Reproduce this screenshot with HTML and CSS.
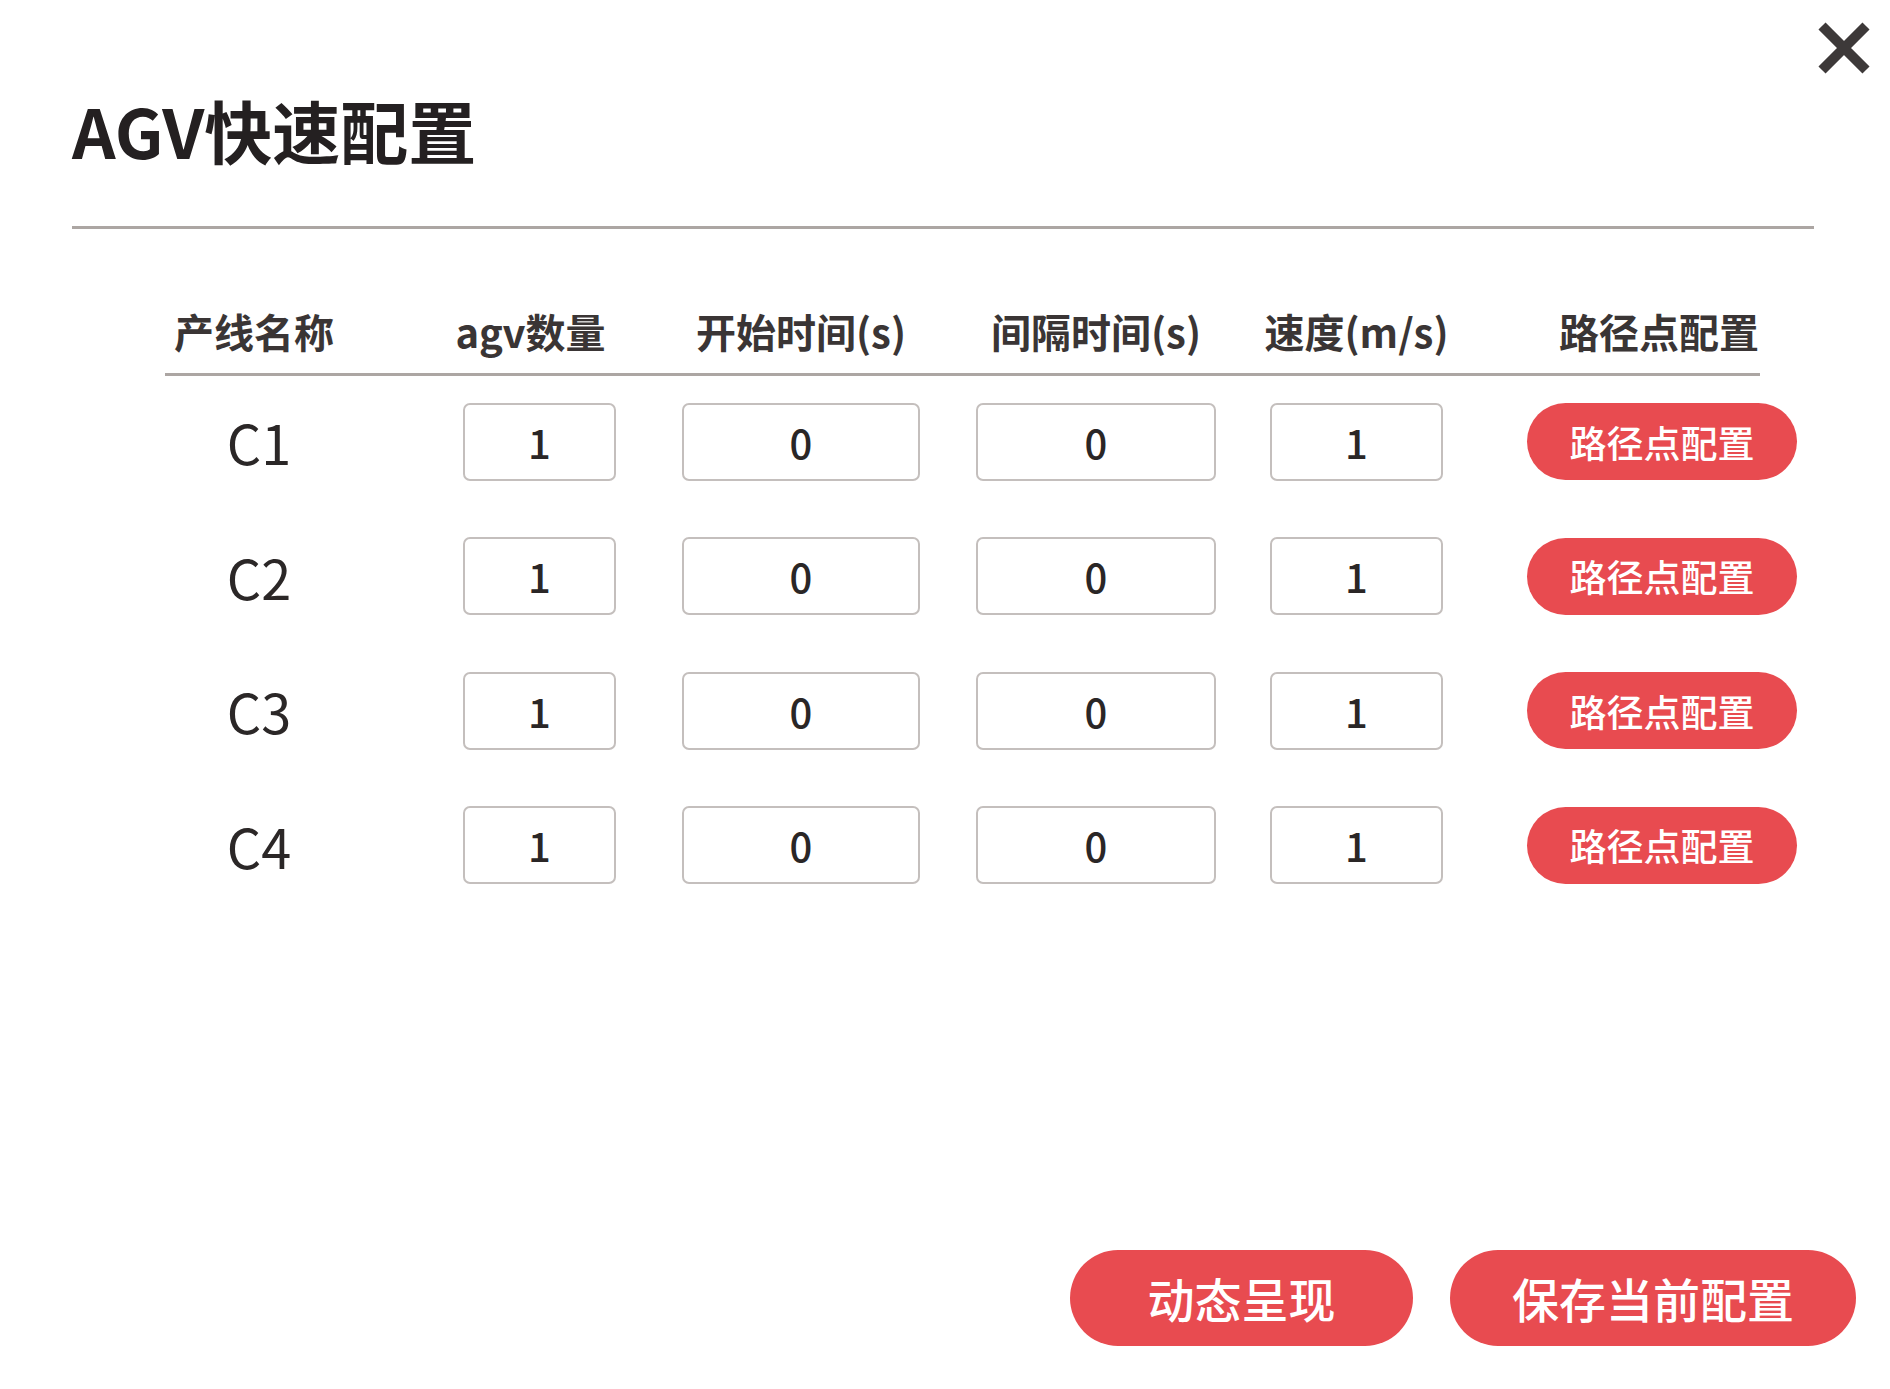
FILE: index.html
```html
<!doctype html>
<html lang="zh-CN">
  <head>
    <title>AGV快速配置</title>
    <meta charset="utf-8" />
    <link rel="stylesheet" href="styles.css">
  </head>

  <body>
    <div class="dialog">
      <button class="close" aria-label="关闭">
        <svg viewBox="0 0 56 56" width="56" height="56">
          <path d="M6 6 L50 50 M50 6 L6 50" />
        </svg>
      </button>

      <h1 class="title">AGV快速配置</h1>
      <hr class="divider" />

      <div class="config">
        <div class="config-head">
          <div class="cell name">产线名称</div>
          <div class="cell"><span class="label w-agv">agv数量</span></div>
          <div class="cell"><span class="label w-start">开始时间(s)</span></div>
          <div class="cell"><span class="label w-gap">间隔时间(s)</span></div>
          <div class="cell"><span class="label w-speed">速度(m/s)</span></div>
          <div class="cell"><span class="label w-path">路径点配置</span></div>
        </div>
        <div class="config-rows" id="rows"></div>
      </div>

      <div class="actions">
        <button class="btn-main btn-show">动态呈现</button>
        <button class="btn-main btn-save">保存当前配置</button>
      </div>
    </div>

    <script type="module">
      const lines = [
        { name: "C1", agv: 1, start: 0, gap: 0, speed: 1 },
        { name: "C2", agv: 1, start: 0, gap: 0, speed: 1 },
        { name: "C3", agv: 1, start: 0, gap: 0, speed: 1 },
        { name: "C4", agv: 1, start: 0, gap: 0, speed: 1 },
      ]

      function numberInput(value, widthClass) {
        const cell = document.createElement("div")
        cell.classList.add("cell")
        const input = document.createElement("input")
        input.type = "text"
        input.value = value
        input.classList.add("num", widthClass)
        cell.appendChild(input)
        return cell
      }

      const rows = document.getElementById("rows")
      lines.forEach((line) => {
        const row = document.createElement("div")
        row.classList.add("config-row")

        // Line name
        const name = document.createElement("div")
        name.classList.add("cell", "name", "line-name")
        name.textContent = line.name
        row.appendChild(name)

        row.appendChild(numberInput(line.agv, "w-agv"))
        row.appendChild(numberInput(line.start, "w-start"))
        row.appendChild(numberInput(line.gap, "w-gap"))
        row.appendChild(numberInput(line.speed, "w-speed"))

        // Path point button
        const cell = document.createElement("div")
        cell.classList.add("cell")
        const button = document.createElement("button")
        button.classList.add("btn-path", "w-path")
        button.textContent = "路径点配置"
        cell.appendChild(button)
        row.appendChild(cell)

        rows.appendChild(row)
      })
    </script>
  </body>
</html>
```

FILE: styles.css
```css
body {
  margin: 0;
  background-color: #fff;
  font-family: "Noto Sans CJK SC", "Noto Sans", sans-serif;
  color: #2f2b2b;
}

.dialog {
  position: relative;
  box-sizing: border-box;
  width: 1890px;
  height: 1389px;
  padding: 96px 34px 0 72px;
}

.close {
  position: absolute;
  top: 20px;
  left: 1816px;
  padding: 0;
  border: none;
  background: none;
  cursor: pointer;
}

.close svg {
  display: block;
}

.close path {
  stroke: #3d3939;
  stroke-width: 10;
  fill: none;
}

.title {
  margin: 0;
  font-size: 68px;
  line-height: 67px;
  font-weight: 700;
  color: #242021;
}

.divider {
  margin: 63px 42px 0 0;
  height: 3px;
  border: none;
  background-color: #aca6a3;
}

.config {
  margin: 82px 0 0 93px;
}

.config-head,
.config-row {
  display: grid;
  grid-template-columns: 178px 273px 304px 296px 227px 354px;
  justify-items: end;
  align-items: center;
}

.config-head {
  width: 1595px;
  padding-bottom: 22px;
  border-bottom: 3px solid #aca6a3;
  font-size: 40px;
  line-height: 40px;
  font-weight: 700;
  color: #3a3535;
  white-space: nowrap;
}

.config-head .label {
  display: flex;
  justify-content: center;
  box-sizing: border-box;
}

.config-head .w-agv {
  padding-right: 18px;
}

.config-head .w-path {
  padding-right: 6px;
}

.cell.name {
  justify-self: center;
}

.line-name {
  padding-left: 10px;
  font-size: 54px;
  color: #2b2727;
}

.config-rows {
  display: flex;
  flex-direction: column;
  gap: 56.5px;
  margin-top: 26px;
}

.config-row {
  height: 78px;
}

.w-agv { width: 153px; }
.w-start { width: 238px; }
.w-gap { width: 240px; }
.w-speed { width: 173px; }
.w-path { width: 270px; }

.num {
  box-sizing: border-box;
  height: 78px;
  padding: 0;
  border: 2px solid #c4bfbd;
  border-radius: 7px;
  font-family: "Noto Sans CJK SC", "Noto Sans", sans-serif;
  font-size: 40px;
  font-weight: 500;
  color: #2a2626;
  text-align: center;
  outline: none;
}

.btn-path,
.btn-main {
  border: none;
  padding: 0;
  background-color: #e84b50;
  color: #fff;
  font-family: "Noto Sans CJK SC", "Noto Sans", sans-serif;
  font-weight: 500;
  cursor: pointer;
}

.btn-path {
  height: 77px;
  border-radius: 39px;
  font-size: 37px;
}

.actions {
  display: flex;
  justify-content: flex-end;
  gap: 37px;
  margin-top: 366px;
}

.btn-main {
  height: 96px;
  border-radius: 48px;
  font-size: 47px;
}

.btn-show { width: 343px; }
.btn-save { width: 406px; }
```
